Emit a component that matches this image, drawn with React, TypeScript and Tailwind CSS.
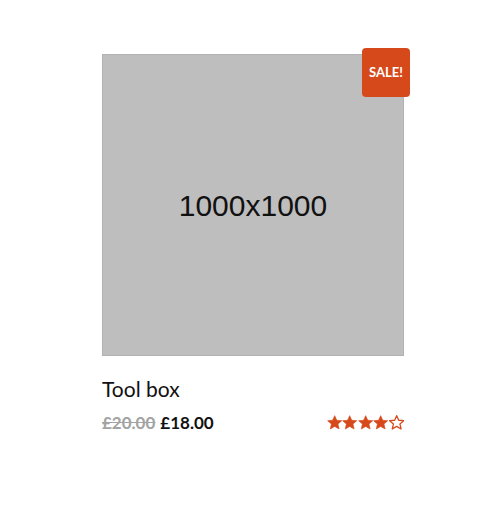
import React from "react";

function Star({ filled }: { filled: boolean }) {
  return (
    <svg width="15.4" height="15.4" viewBox="0 0 24 24" className="shrink-0">
      <path
        d="M12 1l3.2 7.2 7.8.7-5.9 5.2 1.8 7.7L12 17.8l-6.9 4 1.8-7.7L1 8.9l7.8-.7z"
        fill={filled ? "#d6491b" : "#fff"}
        stroke="#d6491b"
        strokeWidth={filled ? 1 : 2}
        strokeLinejoin="round"
      />
    </svg>
  );
}

export default function App() {
  const rating = 4;
  return (
    <div
      className="min-h-[523px] w-[500px] bg-white"
      style={{ fontFamily: "Lato, 'Noto Sans', sans-serif" }}
    >
      <div className="ml-[102px] w-[302px] pt-[54px]">
        <div className="relative">
          <div className="flex h-[302px] w-[302px] items-center justify-center border border-[#b2b2b2] bg-[#bebebe]">
            <span
              className="text-[30px] text-[#111]"
              style={{ fontFamily: "'Liberation Sans', Arial, sans-serif" }}
            >
              1000x1000
            </span>
          </div>
          <div className="absolute right-[-6px] top-[-6px] flex h-[49px] w-[48px] items-center justify-center rounded-[4px] bg-[#d6491b] text-[13px] font-bold text-white">
            SALE!
          </div>
        </div>
        <h2 className="mt-[19px] text-[21px] leading-[28px] text-[#111]">Tool box</h2>
        <div className="mt-[7px] flex items-center justify-between">
          <div className="flex items-baseline gap-[5px] text-[17px] font-bold">
            <span className="text-[#a3a3a3] line-through">£20.00</span>
            <span className="text-[#111]">£18.00</span>
          </div>
          <div className="flex items-center">
            {[0, 1, 2, 3, 4].map((i) => (
              <Star key={i} filled={i < rating} />
            ))}
          </div>
        </div>
      </div>
    </div>
  );
}
